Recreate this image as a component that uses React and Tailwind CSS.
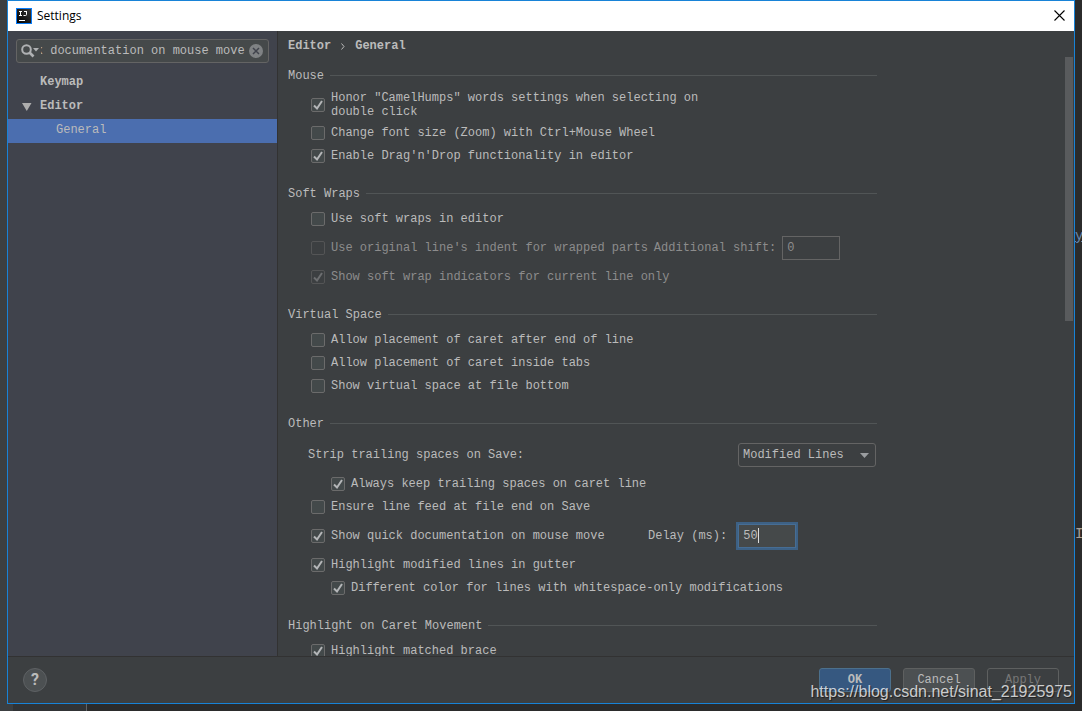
import { useEffect, useRef, useState } from "react";

function App() {
  return (
    <div className="relative h-screen overflow-hidden bg-[#2b2b2b] px-[7px] pb-[7px] font-['Liberation_Mono',monospace] text-xs text-[#bbbbbb]">
      <Backdrop />
      <div className="relative flex h-full flex-col border border-[#1883d7] bg-[#3c3f41]">
        <TitleBar />
        <div className="flex min-h-0 flex-1">
          <Sidebar />
          <GeneralPage />
        </div>
        <Footer />
      </div>
      <p className="pointer-events-none absolute right-[10px] bottom-[7px] font-['Liberation_Sans',sans-serif] text-base leading-6 text-white/75 [text-shadow:1px_1px_1px_rgba(0,0,0,0.5)]">
        https://blog.csdn.net/sinat_21925975
      </p>
    </div>
  );
}

// Slivers of the editor window that show around the dialog
function Backdrop() {
  return (
    <div className="absolute inset-0 flex" aria-hidden="true">
      <div className="w-[13px] bg-[#3c3f41]"></div>
      <div className="w-[74px] border-r border-[#606366] bg-[#313335]"></div>
      <div className="flex-1"></div>
      <div className="w-[7px] overflow-hidden pt-[226px] text-sm leading-5">
        <p className="text-[#6a8ab0] underline">y</p>
        <p className="mt-[278px] text-[#a9a19a]">I</p>
      </div>
    </div>
  );
}

function TitleBar() {
  return (
    <header className="flex h-[30px] shrink-0 items-center bg-white pr-[7px] pl-2 text-black">
      <svg width="16" height="16" viewBox="0 0 16 16" aria-hidden="true">
        <defs>
          <linearGradient id="logo" x1="0" y1="1" x2="1" y2="0">
            <stop offset="0" stopColor="#000" />
            <stop offset="1" stopColor="#3a3a3a" />
          </linearGradient>
        </defs>
        <rect width="16" height="16" fill="#087cfa" />
        <rect x="1" y="1" width="14" height="14" fill="url(#logo)" />
        <path d="M3 3.5h3M4.5 3.5v4M3 7.5h3M8 3.5h3M10.5 3.5v3q0 1-1 1H7.5" fill="none" stroke="#fff" />
        <rect x="3" y="12" width="6" height="1" fill="#fff" />
      </svg>
      <h1 className="ml-[5px] font-['Open_Sans',sans-serif] text-xs">Settings</h1>
      <button type="button" aria-label="Close" className="ml-auto px-[2px] pb-px">
        <svg width="11" height="11" viewBox="0 0 11 11" stroke="#000" strokeWidth="1.1">
          <path d="M.5 .5l10 10M10.5 .5l-10 10" />
        </svg>
      </button>
    </header>
  );
}

function Sidebar() {
  const [query, setQuery] = useState("Show quick documentation on mouse move");
  const inputRef = useRef(null);

  // Keep the end of a long query in view
  useEffect(() => {
    inputRef.current.scrollLeft = inputRef.current.scrollWidth;
  }, [query]);

  return (
    <aside className="w-[270px] shrink-0 border-r border-[#323232] bg-[#40434c] pt-2">
      <div className="mx-2 flex h-6 items-center rounded-[3px] border border-[#646464] bg-[#45494a] px-1">
        <svg width="20" height="16" viewBox="0 0 20 16" aria-hidden="true" className="shrink-0">
          <circle cx="5.500" cy="6.500" r="4.300" fill="none" stroke="#afb1b3" strokeWidth="2" />
          <path d="M8.500 9.500l4 4" stroke="#afb1b3" strokeWidth="2.600" />
          <path d="M12 5h6l-3 3.500z" fill="#afb1b3" />
        </svg>
        <input
          ref={inputRef}
          aria-label="Search settings"
          value={query}
          onChange={(e) => setQuery(e.target.value)}
          className="min-w-0 flex-1 bg-transparent outline-none"
        />
        <button type="button" aria-label="Clear search" onClick={() => setQuery("")} className="ml-[3px] shrink-0">
          <svg width="16" height="16" viewBox="0 0 16 16">
            <circle cx="8" cy="8" r="7" fill="#7f8284" />
            <path d="M5 5l6 6M11 5l-6 6" stroke="#40434c" strokeWidth="1.5" />
          </svg>
        </button>
      </div>

      <nav className="mt-2">
        <TreeItem className="pl-8 font-bold">Keymap</TreeItem>
        <TreeItem className="pl-[14px] font-bold">
          <svg width="10" height="8" viewBox="0 0 10 8" className="mt-[2px] mr-2" aria-hidden="true">
            <path d="M0 0h9.500l-4.750 8z" fill="#adadad" />
          </svg>
          Editor
        </TreeItem>
        <TreeItem className="bg-[#4b6eaf] pl-12">General</TreeItem>
      </nav>
    </aside>
  );
}

function TreeItem({ className, children }) {
  return (
    <a href="#" className={`flex h-6 items-center pb-[2px] ${className}`}>
      {children}
    </a>
  );
}

function GeneralPage() {
  return (
    <main className="flex min-w-0 flex-1">
      <div className="min-w-0 flex-1 overflow-hidden pl-[10px]">
        <div className="max-w-[589px]">
          <h2 className="flex h-[31px] items-center gap-2 pb-px font-bold">
            Editor
            <svg width="8" height="8" viewBox="0 0 8 8" fill="none" stroke="#bbbbbb" aria-hidden="true">
              <path d="M2.500 1.500l2.500 3l-2.500 3" />
            </svg>
            General
          </h2>

          <Section title="Mouse">
            <Row className="h-8">
              <CheckBox checked className="max-w-[400px]">
                Honor "CamelHumps" words settings when selecting on double click
              </CheckBox>
            </Row>
            <Row>
              <CheckBox>Change font size (Zoom) with Ctrl+Mouse Wheel</CheckBox>
            </Row>
            <Row>
              <CheckBox checked>Enable Drag'n'Drop functionality in editor</CheckBox>
            </Row>
          </Section>

          <Section title="Soft Wraps">
            <Row>
              <CheckBox>Use soft wraps in editor</CheckBox>
            </Row>
            <Row className="h-[35px] gap-[6px]">
              <CheckBox disabled>Use original line's indent for wrapped parts</CheckBox>
              <label htmlFor="shift" className="whitespace-nowrap text-[#8c8c8c]">Additional shift:</label>
              <input
                id="shift"
                disabled
                defaultValue="0"
                className="h-6 w-[58px] border border-[#646464] px-1 text-[#8c8c8c]"
              />
            </Row>
            <Row>
              <CheckBox checked disabled>Show soft wrap indicators for current line only</CheckBox>
            </Row>
          </Section>

          <Section title="Virtual Space">
            <Row>
              <CheckBox>Allow placement of caret after end of line</CheckBox>
            </Row>
            <Row>
              <CheckBox>Allow placement of caret inside tabs</CheckBox>
            </Row>
            <Row>
              <CheckBox>Show virtual space at file bottom</CheckBox>
            </Row>
          </Section>

          <Section title="Other">
            <div className="flex h-[35px] items-center justify-between pr-px pl-5">
              <label htmlFor="strip">Strip trailing spaces on Save:</label>
              <div className="relative">
                <select
                  id="strip"
                  className="block h-6 w-[138px] appearance-none rounded-[3px] border border-[#646464] bg-[#3c3f41] pl-1 outline-none"
                >
                  <option>Modified Lines</option>
                  <option>All</option>
                  <option>None</option>
                </select>
                <svg width="9" height="5" viewBox="0 0 9 5" className="pointer-events-none absolute top-[10px] right-[7px]" aria-hidden="true">
                  <path d="M0 0h9l-4.500 5z" fill="#9a9da0" />
                </svg>
              </div>
            </div>
            <Row className="h-[23px] pl-[43px]">
              <CheckBox checked>Always keep trailing spaces on caret line</CheckBox>
            </Row>
            <Row>
              <CheckBox>Ensure line feed at file end on Save</CheckBox>
            </Row>
            <Row className="h-[35px]">
              <CheckBox checked className="min-w-[337px]">Show quick documentation on mouse move</CheckBox>
              <label htmlFor="delay" className="mr-[11px] whitespace-nowrap">Delay (ms):</label>
              <div className="relative">
                <input
                  id="delay"
                  defaultValue="50"
                  className="block h-6 w-[58px] border border-[#466d94] bg-[#45494a] px-1 ring-2 ring-[#3d6185] outline-none"
                />
                <span className="absolute top-1 left-5 h-[15px] w-px bg-[#dddddd]"></span>
              </div>
            </Row>
            <Row>
              <CheckBox checked>Highlight modified lines in gutter</CheckBox>
            </Row>
            <Row className="h-[23px] pl-[43px]">
              <CheckBox checked>Different color for lines with whitespace-only modifications</CheckBox>
            </Row>
          </Section>

          <Section title="Highlight on Caret Movement">
            <Row>
              <CheckBox checked>Highlight matched brace</CheckBox>
            </Row>
          </Section>
        </div>
      </div>

      <div className="w-[9px] shrink-0 pt-[26px] pr-px">
        <div className="h-[44%] bg-[#595b5d]"></div>
      </div>
    </main>
  );
}

function Section({ title, children }) {
  return (
    <section className="mb-[13px]">
      <h3 className="flex h-[27px] items-center gap-[6px]">
        {title}
        <span className="h-px flex-1 bg-[#515556]"></span>
      </h3>
      {children}
    </section>
  );
}

function Row({ className = "h-[23px]", children }) {
  const indent = className.includes("pl-") ? "" : "pl-[23px]";
  return <div className={`flex items-center ${indent} ${className}`}>{children}</div>;
}

function CheckBox({ checked = false, disabled = false, className = "", children }) {
  const [on, setOn] = useState(checked);

  return (
    <label className={`flex items-center gap-[6px] ${disabled ? "text-[#8c8c8c]" : ""} ${className}`}>
      <span className="relative h-[14px] w-[14px] shrink-0">
        <input
          type="checkbox"
          checked={on}
          disabled={disabled}
          onChange={() => setOn(!on)}
          className="block h-[14px] w-[14px] appearance-none rounded-[2px] border border-[#6b6b6b] bg-[#43494a] disabled:border-[#545556] disabled:bg-transparent"
        />
        {on && (
          <svg width="14" height="14" viewBox="0 0 14 14" className="pointer-events-none absolute inset-0" aria-hidden="true">
            <path d="M3 7.500l3 3l5-7.500" fill="none" stroke={disabled ? "#6c6e70" : "#b4b6b8"} strokeWidth="2" />
          </svg>
        )}
      </span>
      <span className="leading-[14px]">{children}</span>
    </label>
  );
}

function Footer() {
  return (
    <footer className="flex h-[47px] shrink-0 items-center gap-3 border-t border-[#323232] pr-[15px] pl-[15px]">
      <button
        type="button"
        aria-label="Help"
        className="mr-auto h-6 w-6 rounded-full border border-[#5e6164] bg-[#4c5052] font-['Roboto',sans-serif] text-base leading-[22px] font-bold"
      >
        ?
      </button>
      <button type="button" className="h-6 w-[72px] rounded-[3px] border border-[#4c708c] bg-[#365880] font-bold">OK</button>
      <button type="button" className="h-6 w-[72px] rounded-[3px] border border-[#5e6060] bg-[#4c5052]">Cancel</button>
      <button type="button" disabled className="h-6 w-[72px] rounded-[3px] border border-[#5e6060] text-[#777777]">Apply</button>
    </footer>
  );
}

export default App;
